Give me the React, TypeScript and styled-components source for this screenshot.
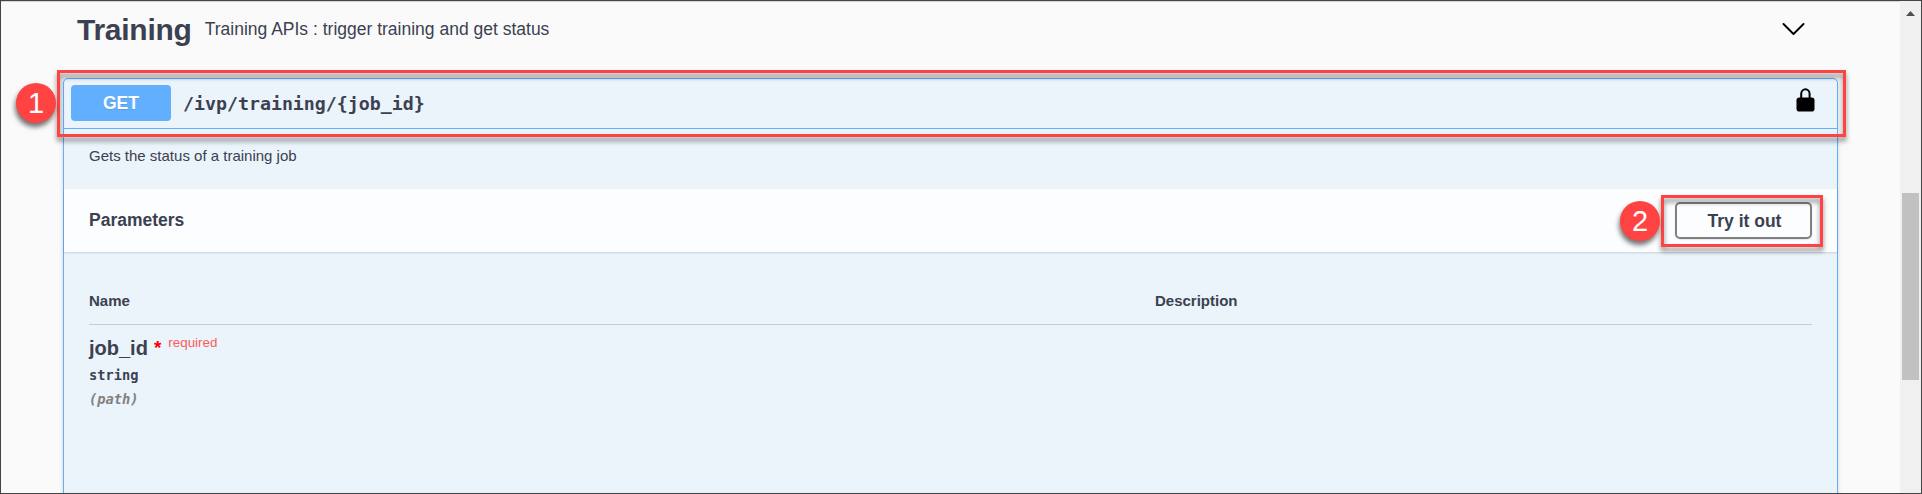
import React from "react";
import styled, { createGlobalStyle } from "styled-components";

const Global = createGlobalStyle`
  *, *::before, *::after { box-sizing: border-box; }
  body { margin: 0; background: #fafafa; }
`;

const sans = `"Liberation Sans", Arial, sans-serif`;
const mono = `"DejaVu Sans Mono", monospace`;

const Page = styled.div`
  position: relative;
  display: flex;
  height: 494px;
  overflow: hidden;
  border: 1px solid #444346;
  background: #fafafa;
  box-shadow: inset 0 1px 0 #d4d4d4;
  color: #3b4151;
  font-family: ${sans};
`;

const Content = styled.main`
  flex: 1;
  min-width: 0;
  padding: 0 62px;
  display: flex;
  flex-direction: column;
`;

const TagHeader = styled.header`
  flex: none;
  display: flex;
  align-items: center;
  height: 57px;
  padding: 0 33px 0 14px;
`;

const TagTitle = styled.h3`
  margin: 0;
  font-size: 30px;
  line-height: 36px;
  font-weight: 700;
  letter-spacing: -0.25px;
`;

const TagDescription = styled.p`
  flex: 1;
  margin: 0 0 0 13px;
  padding-bottom: 2px;
  font-size: 17.5px;
  line-height: 24px;
`;

const Operation = styled.section`
  flex: none;
  height: 440px;
  margin-top: 20px;
  border: 1px solid #61affe;
  border-radius: 5px;
  background: #ebf3fb;
  box-shadow: 0 0 4px rgba(0, 0, 0, 0.15);
`;

const Summary = styled.div`
  display: flex;
  align-items: flex-start;
  height: 50px;
  padding: 6px 22px 0 7px;
  border-bottom: 1px solid #61affe;
`;

const Method = styled.span`
  width: 100px;
  height: 36px;
  border-radius: 4px;
  background: #61affe;
  color: #fff;
  font-size: 17.5px;
  line-height: 36px;
  font-weight: 700;
  text-align: center;
  text-shadow: 0 1px 0 rgba(0, 0, 0, 0.1);
`;

const Path = styled.span`
  flex: 1;
  padding-left: 12px;
  font-family: ${mono};
  font-size: 18.25px;
  line-height: 38px;
  font-weight: 700;
`;

const LockIcon = styled.svg`
  margin-top: 3px;
`;

const Note = styled.p`
  margin: 0;
  height: 60px;
  padding: 17px 25px 0;
  font-size: 15px;
  line-height: 20px;
`;

const SectionHeader = styled.div`
  display: flex;
  align-items: center;
  justify-content: space-between;
  height: 63px;
  padding: 0 25px;
  background: #fcfdff;
  box-shadow: 0 1px 2px rgba(0, 0, 0, 0.15);
`;

const SectionTitle = styled.h4`
  margin: 0;
  padding-bottom: 2px;
  font-size: 17.5px;
  line-height: 22px;
`;

const TryButton = styled.button`
  width: 137px;
  height: 37px;
  padding: 1px 0 0 2px;
  border: 2px solid #808080;
  border-radius: 5px;
  background: transparent;
  box-shadow: 0 1px 2px rgba(0, 0, 0, 0.1);
  color: #3b4151;
  font: 700 17.5px ${sans};
`;

const Table = styled.div`
  display: grid;
  grid-template-columns: 1066px 1fr;
  padding: 35px 25px 0;
`;

const HeadCell = styled.div`
  height: 38px;
  border-bottom: 1px solid #c4ccd9;
  font-size: 15px;
  line-height: 28px;
  font-weight: 700;
`;

const Cell = styled.div`
  padding-top: 11px;
`;

const ParamName = styled.div`
  display: flex;
  align-items: flex-start;
  height: 27px;
  font-size: 20px;
  line-height: 24px;
  font-weight: 700;
`;

const Star = styled.span`
  margin-left: 6px;
  color: #f00;
  font-size: 19px;
`;

const Required = styled.span`
  margin-left: 7px;
  color: #ff5a5a;
  font-size: 13.4px;
  line-height: 13px;
  font-weight: 400;
`;

const ParamMeta = styled.div<{ $muted?: boolean }>`
  height: 24px;
  font: ${(p) => (p.$muted ? "italic" : "normal")} 700 13.7px / 24px ${mono};
  color: ${(p) => (p.$muted ? "#808080" : "#3b4151")};
`;

const ScrollTrack = styled.aside`
  flex: none;
  display: flex;
  flex-direction: column;
  align-items: center;
  width: 21px;
  background: #f0f0f0;
`;

const ScrollArrow = styled.svg`
  flex: none;
  margin-top: 10px;
`;

const ScrollThumb = styled.div`
  width: 17px;
  height: 187px;
  margin-top: 177px;
  background: #c1c1c1;
`;

const Highlight = styled.div<{ $x: number; $y: number; $w: number; $h: number }>`
  position: absolute;
  left: ${(p) => p.$x - 1}px;
  top: ${(p) => p.$y - 1}px;
  width: ${(p) => p.$w}px;
  height: ${(p) => p.$h}px;
  border: 3px solid #ff4343;
  filter: drop-shadow(0 4px 2.5px rgba(0, 0, 0, 0.5));
`;

const Badge = styled.div<{ $x: number; $y: number }>`
  position: absolute;
  left: ${(p) => p.$x - 1}px;
  top: ${(p) => p.$y - 1}px;
  width: 40px;
  height: 40px;
  border-radius: 50%;
  background: #ff4343;
  box-shadow: -1px 4px 5px rgba(0, 0, 0, 0.55);
  color: #fff;
  font-size: 29px;
  line-height: 41px;
  text-align: center;
`;

export default function App() {
  return (
    <>
      <Global />
      <Page>
        <Content>
          <TagHeader>
            <TagTitle>Training</TagTitle>
            <TagDescription>Training APIs : trigger training and get status</TagDescription>
            <svg width="23" height="14" viewBox="0 0 23 14" fill="none" stroke="#000" strokeWidth="1.9">
              <path d="M1.5 1 L11.5 11 L21.5 1" strokeLinecap="round" strokeLinejoin="round" />
            </svg>
          </TagHeader>
          <Operation>
            <Summary>
              <Method>GET</Method>
              <Path>{"/ivp/training/{job_id}"}</Path>
              <LockIcon width="19" height="24" viewBox="0 0 19 24">
                <path d="M5.2 10 V6 a4.2 4.7 0 0 1 8.4 0 V10" fill="none" stroke="#000" strokeWidth="2" />
                <rect x="0.5" y="9.5" width="18" height="14" rx="2.8" />
              </LockIcon>
            </Summary>
            <Note>Gets the status of a training job</Note>
            <SectionHeader>
              <SectionTitle>Parameters</SectionTitle>
              <TryButton>Try it out</TryButton>
            </SectionHeader>
            <Table>
              <HeadCell>Name</HeadCell>
              <HeadCell>Description</HeadCell>
              <Cell>
                <ParamName>
                  <span>job_id</span>
                  <Star>*</Star>
                  <Required>required</Required>
                </ParamName>
                <ParamMeta>string</ParamMeta>
                <ParamMeta $muted>(path)</ParamMeta>
              </Cell>
              <Cell />
            </Table>
          </Operation>
        </Content>
        <ScrollTrack>
          <ScrollArrow width="9" height="5" viewBox="0 0 9 5">
            <path d="M4.5 0 L9 5 H0 Z" fill="#505050" />
          </ScrollArrow>
          <ScrollThumb />
        </ScrollTrack>
        <Highlight $x={57} $y={70} $w={1789} $h={67} />
        <Highlight $x={1661} $y={195} $w={162} $h={52} />
        <Badge $x={16} $y={83}>1</Badge>
        <Badge $x={1620} $y={201}>2</Badge>
      </Page>
    </>
  );
}
